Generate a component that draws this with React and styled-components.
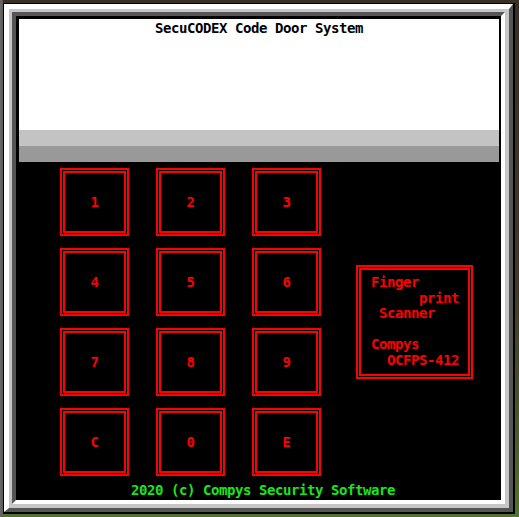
import React from 'react';
import styled, { createGlobalStyle } from 'styled-components';

const GlobalStyle = createGlobalStyle`
  html, body {
    margin: 0;
    padding: 0;
  }
  body {
    width: 519px;
    height: 517px;
    overflow: hidden;
    background:
      linear-gradient(90deg, #6a6a6a 0px, #5a5a5a 3px, transparent 3px),
      linear-gradient(180deg, #3a2f24 0%, #453829 55%, #4b5a2c 85%, #54732f 100%);
  }
`;

const RED = '#ff0000';
const MONO = `"DejaVu Sans Mono", "Liberation Mono", monospace`;

const Frame = styled.div`
  box-sizing: border-box;
  margin: 3px 0 0 3px;
  width: 512px;
  height: 511px;
  display: flex;
  border-style: solid;
  border-width: 1px 2px 2px 1px;
  border-color: #000;
`;

const Bevel = styled.div`
  flex: 1;
  display: flex;
  border-style: solid;
  border-width: 5px 4px 4px 5px;
  border-color: #fff #555 #555 #fff;
`;

const Body = styled.div`
  flex: 1;
  display: flex;
  background: #c6c6c6;
  padding: 3px 4px 4px 3px;
`;

const Inset = styled.div`
  flex: 1;
  display: flex;
  border-style: solid;
  border-width: 4px;
  border-color: #555 #fff #fff #555;
`;

const Screen = styled.div`
  flex: 1;
  display: flex;
  flex-direction: column;
  border-style: solid;
  border-width: 3px 2px 2px 3px;
  border-color: #000;
  background: #000;
  overflow: hidden;
  font-family: ${MONO};
  font-weight: bold;
  font-size: 14px;
  letter-spacing: -0.43px;
`;

const Display = styled.div`
  height: 112px;
  background: #fff;
  box-sizing: border-box;
  padding-top: 1px;
`;

const Title = styled.div`
  text-align: center;
  line-height: 16px;
  color: #000;
`;

const Band = styled.div`
  height: 16px;
  background: ${(p) => p.$tone};
`;

const Console = styled.div`
  flex: 1;
  display: flex;
  flex-direction: column;
  padding-top: 6px;
`;

const Row = styled.div`
  display: flex;
  align-items: center;
  gap: 35px;
  padding-left: 41px;
`;

const Keypad = styled.div`
  display: grid;
  grid-template-columns: repeat(3, 69px);
  grid-auto-rows: 68px;
  column-gap: 27px;
  row-gap: 12px;
`;

const Key = styled.button`
  all: unset;
  box-sizing: border-box;
  display: flex;
  align-items: center;
  justify-content: center;
  border: 2px solid ${RED};
  box-shadow: inset 0 0 0 1px #000, inset 0 0 0 3px ${RED};
  color: ${RED};
  font: inherit;
  letter-spacing: inherit;
  cursor: pointer;
`;

const Scanner = styled.div`
  box-sizing: border-box;
  width: 117px;
  height: 114px;
  border: 2px solid ${RED};
  box-shadow: inset 0 0 0 1px #000, inset 0 0 0 3px ${RED};
  padding: 8px 0 0 13px;
  color: ${RED};
  white-space: pre;
  line-height: 15.5px;
`;

const Footer = styled.div`
  margin-top: 6px;
  line-height: 16px;
  text-align: center;
  padding-left: 8px;
  color: #1ae61a;
`;

const keys = ['1', '2', '3', '4', '5', '6', '7', '8', '9', 'C', '0', 'E'];

export default function App() {
  return (
    <>
      <GlobalStyle />
      <Frame>
        <Bevel>
          <Body>
            <Inset>
              <Screen>
                <Display>
                  <Title>SecuCODEX Code Door System</Title>
                </Display>
                <Band $tone="#c3c3c3" />
                <Band $tone="#999999" />
                <Console>
                  <Row>
                    <Keypad>
                      {keys.map((k) => (
                        <Key key={k}>{k}</Key>
                      ))}
                    </Keypad>
                    <Scanner>
                      {'Finger\n      print\n Scanner\n\nCompys\n  OCFPS-412'}
                    </Scanner>
                  </Row>
                  <Footer>2020 (c) Compys Security Software</Footer>
                </Console>
              </Screen>
            </Inset>
          </Body>
        </Bevel>
      </Frame>
    </>
  );
}
